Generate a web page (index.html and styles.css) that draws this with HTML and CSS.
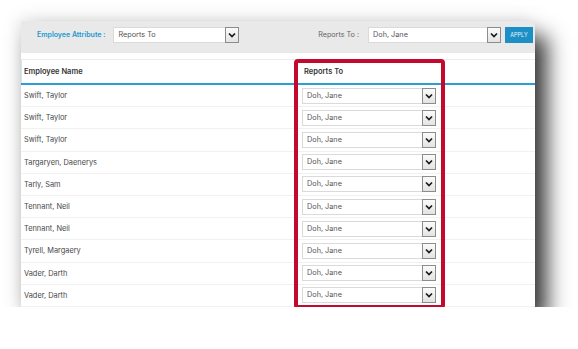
FILE: index.html
```html
<!DOCTYPE html>
<html>
<head>
  <link rel="stylesheet" href="styles.css">
</head>
<body>
  <div class="frame">
    <div class="card">
      <div class="toolbar">
        <span class="attr-label">Employee Attribute :</span>
        <div class="select select-attr">
          <span class="select-value">Reports To</span>
          <span class="select-arrow"><svg width="10" height="10" viewBox="0 0 10 10"><polyline points="2,3.5 5,6.5 8,3.5" fill="none" stroke="#1a1a1a" stroke-width="1.7"/></svg></span>
        </div>
        <div class="toolbar-right">
          <span class="reports-label">Reports To :</span>
          <div class="select select-reports">
            <span class="select-value">Doh, Jane</span>
            <span class="select-arrow"><svg width="10" height="10" viewBox="0 0 10 10"><polyline points="2,3.5 5,6.5 8,3.5" fill="none" stroke="#1a1a1a" stroke-width="1.7"/></svg></span>
          </div>
          <button class="apply">APPLY</button>
        </div>
      </div>
      <div class="spacer"></div>

      <div class="grid">
        <div class="row head">
          <div class="cell name">Employee Name</div>
          <div class="cell">Reports To</div>
          <div class="cell"></div>
        </div>
      </div>
      <div class="grid" id="rows"></div>

      <div class="highlight"></div>
    </div>
  </div>

  <script>
    const names = [
      'Swift, Taylor', 'Swift, Taylor', 'Swift, Taylor', 'Targaryen, Daenerys',
      'Tarly, Sam', 'Tennant, Neil', 'Tennant, Neil', 'Tyrell, Margaery',
      'Vader, Darth', 'Vader, Darth'
    ];
    const rows = document.getElementById('rows');
    const arrow = '<svg width="10" height="10" viewBox="0 0 10 10"><polyline points="2,3.5 5,6.5 8,3.5" fill="none" stroke="#1a1a1a" stroke-width="1.7"/></svg>';
    names.forEach(name => {
      const row = document.createElement('div');
      row.className = 'row';
      row.innerHTML = `
        <div class="cell name">${name}</div>
        <div class="cell">
          <div class="select select-row">
            <span class="select-value">Doh, Jane</span>
            <span class="select-arrow">${arrow}</span>
          </div>
        </div>
        <div class="cell"></div>`;
      rows.appendChild(row);
    });
  </script>
</body>
</html>
```

FILE: styles.css
```css
body {
  margin: 0;
  background: #fff;
  font-family: Inter, "Liberation Sans", sans-serif;
  color: #444;
}
.frame {
  padding: 21px 0 0 21px;
}
.card {
  position: relative;
  width: 514px;
  background: #fff;
  box-shadow: 12px 15px 20px rgba(0, 0, 0, 0.78), -3px -3px 16px rgba(0, 0, 0, 0.1);
}
.toolbar {
  display: flex;
  align-items: flex-start;
  height: 32px;
  box-sizing: border-box;
  padding: 6px 2px 0 16px;
  background: #e9e9e9;
}
.attr-label {
  color: #2499d3;
  font-size: 7px;
  font-weight: 600;
  line-height: 16px;
  margin-right: 8px;
}
.toolbar-right {
  display: flex;
  align-items: flex-start;
  margin-left: auto;
}
.reports-label {
  color: #666;
  font-size: 7.2px;
  line-height: 16px;
  margin-right: 9px;
}
.select {
  display: flex;
  height: 16px;
  box-sizing: border-box;
  border: 1px solid #dadada;
  background: #fff;
}
.select-value {
  flex: 1;
  padding-left: 4px;
  font-size: 7.3px;
  line-height: 14px;
  color: #555;
}
.select-arrow {
  display: flex;
  align-items: center;
  justify-content: center;
  width: 12px;
  margin: -1px -1px -1px 0;
  border: 1px solid #8c8c8c;
  background: linear-gradient(#fbfbfb, #e3e3e3);
}
.select-attr {
  width: 126px;
}
.select-reports {
  width: 133px;
}
.apply {
  width: 28px;
  height: 16px;
  margin-left: 4px;
  padding: 0;
  border: none;
  background: #1c90c6;
  color: #e8f4fb;
  font-family: inherit;
  font-size: 5.5px;
}
.spacer {
  height: 6px;
  border-bottom: 1px solid #ececec;
}
.grid {
  display: flex;
  flex-direction: column;
}
.row {
  display: grid;
  grid-template-columns: 277px 147px 1fr;
  height: 22.2px;
  box-sizing: border-box;
  border-bottom: 1px solid #f1f1f1;
  align-items: center;
  font-size: 7.4px;
  color: #484848;
}
.row .cell.name {
  padding-left: 3px;
}
.row .cell:nth-child(2) {
  padding-left: 4px;
}
.row.head {
  height: 25px;
  border-bottom: 2px solid #2a9fd6;
  font-weight: 600;
  font-size: 7.5px;
  color: #333;
}
.row.head .cell:nth-child(2) {
  padding-left: 6px;
}
.row.head .cell.name {
  height: 100%;
  display: flex;
  align-items: center;
  padding-left: 2px;
  border-left: 1px solid #cfe6f3;
}
.select-row {
  width: 134px;
}
.highlight {
  position: absolute;
  left: 273px;
  top: 38px;
  width: 151px;
  height: 250px;
  box-sizing: border-box;
  border: 4px solid #c4092f;
  border-radius: 4px;
}
```
